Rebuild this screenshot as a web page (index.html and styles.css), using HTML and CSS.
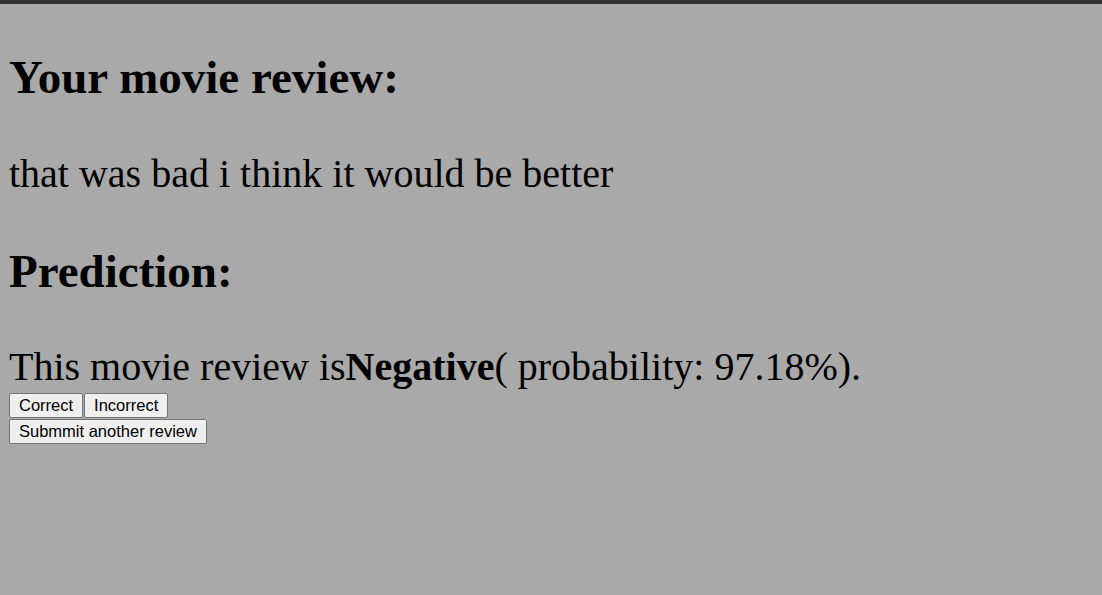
FILE: index.html
```html
<!DOCTYPE html>
<html>
<head>
<meta charset="utf-8">
<link rel="stylesheet" href="styles.css">
</head>
<body>
<div class="topbar"></div>
<div class="page">
  <h1 class="title">Your movie review:</h1>
  <div class="review">that was bad i think it would be better</div>
  <h1 class="title title-second">Prediction:</h1>
  <div class="result">This movie review is<strong>Negative</strong>( probability: 97.18%).</div>
  <form class="row"><button type="button" class="btn">Correct</button><button type="button" class="btn">Incorrect</button></form>
  <form class="row"><button type="button" class="btn">Submmit another review</button></form>
</div>
</body>
</html>
```
FILE: styles.css
```css
html, body { margin: 0; padding: 0; }
body { background: #a9a9a9; font-family: "Liberation Serif", "Times New Roman", serif; color: #000; }
.topbar { height: 4px; background: #333; }
.page { padding: 46px 9px 8px 9px; }
.title { font-size: 47px; font-weight: bold; margin: 0; line-height: 54px; }
.title-second { margin-top: 47px; }
.review { font-size: 40px; margin-top: 47px; line-height: 46px; }
.result { font-size: 40px; margin-top: 44px; margin-bottom: 1px; line-height: 50px; }
.row { margin: 0 0 1px 0; display: flex; gap: 1px; }
.btn { font-family: "Liberation Sans", Arial, sans-serif; font-size: 16.5px; line-height: 19px; padding: 2px 9px; background: #efefef; border: 1px solid #767676; border-radius: 2px; color: #000; }
```
